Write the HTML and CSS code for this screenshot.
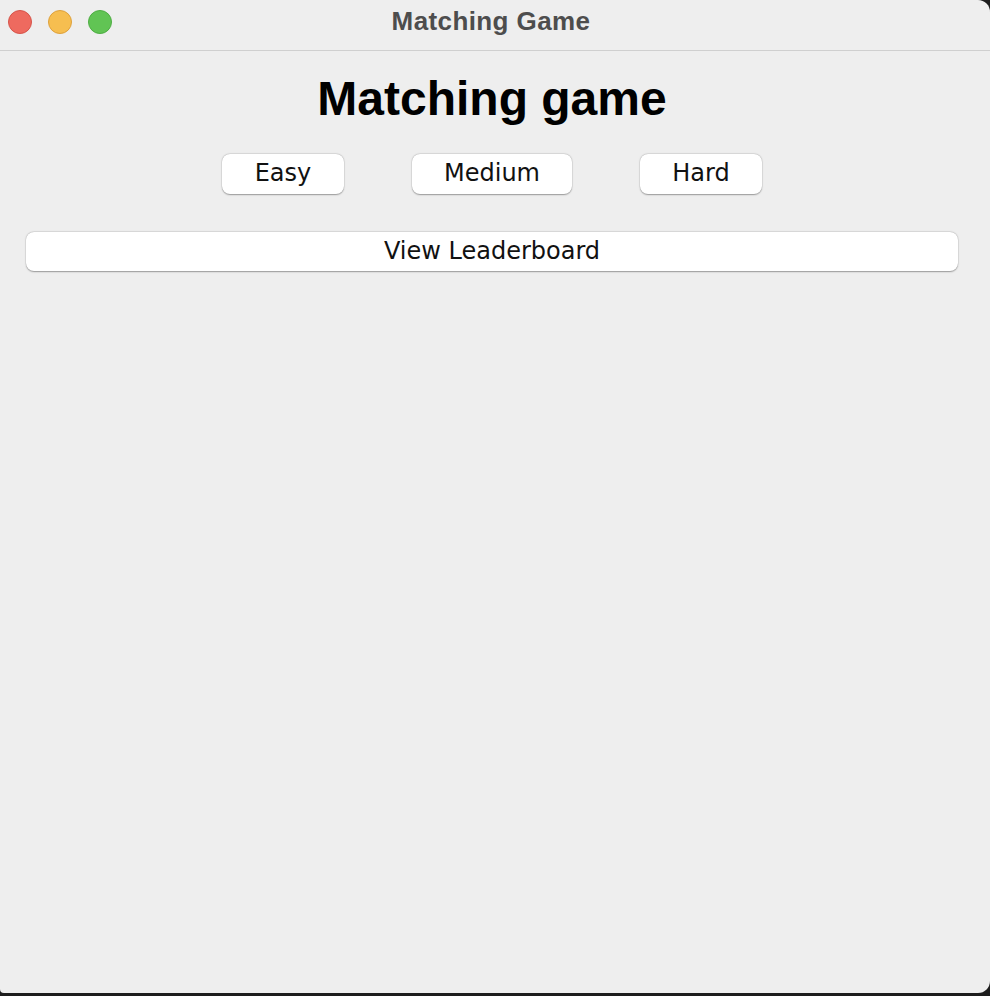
FILE: index.html
```html
<!DOCTYPE html>
<html lang="en">
<head>
<meta charset="utf-8">
<title>Matching Game</title>
<link rel="stylesheet" href="styles.css">
</head>
<body>
<div class="window">
  <header class="titlebar">
    <div class="lights">
      <span class="light red"></span>
      <span class="light yellow"></span>
      <span class="light green"></span>
    </div>
    <div class="title">Matching Game</div>
  </header>
  <main class="content">
    <h1 class="heading">Matching game</h1>
    <div class="levels">
      <button class="btn btn-easy">Easy</button>
      <button class="btn btn-medium">Medium</button>
      <button class="btn btn-hard">Hard</button>
    </div>
    <button class="btn btn-wide">View Leaderboard</button>
  </main>
</div>
</body>
</html>
```

FILE: styles.css
```css
html, body {
  margin: 0;
  padding: 0;
  width: 990px;
  height: 996px;
  background: #1d1d1d;
  overflow: hidden;
}

.window {
  width: 990px;
  height: 993px;
  background: #eeeeee;
  border-radius: 0 12px 12px 4px;
  display: flex;
  flex-direction: column;
  overflow: hidden;
}

.titlebar {
  height: 50px;
  border-bottom: 1px solid #cfcfcf;
  display: flex;
  align-items: center;
  justify-content: center;
  position: relative;
  flex: none;
}

.lights {
  position: absolute;
  left: 8px;
  top: 10px;
  display: flex;
  gap: 16px;
}

.light {
  width: 24px;
  height: 24px;
  border-radius: 50%;
  box-sizing: border-box;
}

.red { background: #ee6a5f; border: 1px solid #d6544a; }
.yellow { background: #f6be50; border: 1px solid #dea13c; }
.green { background: #61c454; border: 1px solid #4ead43; }

.title {
  font-family: "Liberation Sans", Arial, sans-serif;
  font-weight: bold;
  font-size: 26px;
  letter-spacing: 0.4px;
  color: #4d4d4d;
  margin-top: -8px;
  margin-left: -8px;
}

.content {
  padding: 0 32px 0 26px;
  display: flex;
  flex-direction: column;
  align-items: stretch;
}

.heading {
  margin: 24px 0 0;
  font-family: "Liberation Sans", Arial, sans-serif;
  font-weight: bold;
  font-size: 48px;
  line-height: 48px;
  text-align: center;
  color: #000;
}

.levels {
  margin-top: 31px;
  display: flex;
  justify-content: center;
  gap: 68px;
}

.btn {
  font-family: "DejaVu Sans", "Lucida Grande", sans-serif;
  font-size: 24px;
  color: #111;
  background: #fff;
  border: none;
  border-radius: 8px;
  height: 40px;
  padding: 0 0 2px;
  box-shadow: 0 0.5px 1.5px rgba(0, 0, 0, 0.35), 0 0 0 0.5px rgba(0, 0, 0, 0.06);
  cursor: pointer;
}

.btn-easy { width: 122px; }
.btn-medium { width: 160px; }
.btn-hard { width: 122px; }

.btn-wide {
  margin-top: 38px;
  width: 100%;
  height: 39px;
}
```
